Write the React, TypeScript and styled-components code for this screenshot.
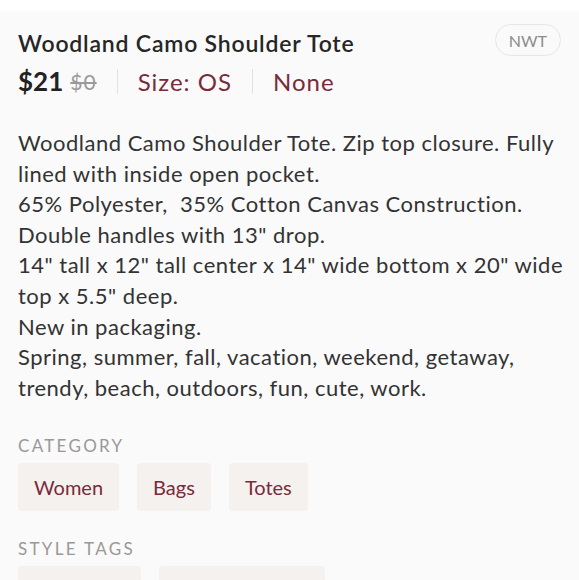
import React from "react";
import styled, { createGlobalStyle } from "styled-components";

const Global = createGlobalStyle`
  html, body { margin: 0; padding: 0; background: #ffffff; }
  body { font-family: Lato, "Open Sans", sans-serif; -webkit-font-smoothing: antialiased; }
`;

const Page = styled.div`
  margin-top: 11px;
  background: #fafafa;
  min-height: 569px;
  padding: 13px 12px 0 18px;
  box-sizing: border-box;
  color: #333333;
`;

const Header = styled.div`
  display: flex;
  justify-content: space-between;
  align-items: flex-start;
  padding-right: 6px;
`;

const Title = styled.h1`
  margin: 0;
  padding-top: 1px;
  font-size: 23px;
  font-weight: 600;
  letter-spacing: 0.8px;
  color: #262626;
  line-height: 36px;
`;

const Condition = styled.span`
  height: 32px;
  padding: 0 13px;
  box-sizing: border-box;
  display: inline-flex;
  align-items: center;
  border: 1px solid #e6e6e6;
  border-radius: 16px;
  font-size: 16px;
  color: #8c8c8c;
`;

const PriceRow = styled.div`
  display: flex;
  align-items: center;
  margin-top: 2px;
  height: 36px;
`;

const Price = styled.span`
  font-size: 26px;
  font-weight: 700;
  color: #222222;
`;

const OldPrice = styled.span`
  font-size: 21px;
  color: #9a9a9a;
  text-decoration: line-through;
  letter-spacing: 1px;
  margin-left: 7px;
`;

const Sep = styled.span`
  width: 1px;
  height: 25px;
  background: #e2e2e2;
  margin: 0 20px;
`;

const Meta = styled.span`
  font-size: 24px;
  letter-spacing: 1px;
  color: #7a2a3a;
`;

const Description = styled.p`
  margin: 29px 0 0 0;
  font-size: 22px;
  letter-spacing: 0.5px;
  line-height: 30.6px;
  color: #333333;
  white-space: pre-wrap;
`;

const Section = styled.div<{ $top: number }>`
  margin-top: ${(p) => p.$top}px;
`;

const Label = styled.div`
  font-size: 17px;
  letter-spacing: 2.3px;
  color: #9a9896;
  text-transform: uppercase;
  line-height: 20px;
`;

const Chips = styled.div`
  display: flex;
  gap: 18px;
  margin-top: 7px;
`;

const Chip = styled.span<{ $w?: number }>`
  height: 48px;
  box-sizing: border-box;
  padding: 0 16px;
  display: inline-flex;
  align-items: center;
  justify-content: center;
  background: #f4f1ee;
  border-radius: 4px;
  font-size: 20px;
  color: #7a2a3a;
  ${(p) => (p.$w ? `width: ${p.$w}px;` : "")}
`;

const description = `Woodland Camo Shoulder Tote. Zip top closure. Fully lined with inside open pocket.
65% Polyester,  35% Cotton Canvas Construction.
Double handles with 13" drop.
14" tall x 12" tall center x 14" wide bottom x 20" wide top x 5.5" deep.
New in packaging.
Spring, summer, fall, vacation, weekend, getaway, trendy, beach, outdoors, fun, cute, work.`;

export default function App() {
  return (
    <>
      <Global />
      <Page>
        <Header>
          <Title>Woodland Camo Shoulder Tote</Title>
          <Condition>NWT</Condition>
        </Header>
        <PriceRow>
          <Price>$21</Price>
          <OldPrice>$0</OldPrice>
          <Sep />
          <Meta>Size: OS</Meta>
          <Sep />
          <Meta>None</Meta>
        </PriceRow>
        <Description>{description}</Description>
        <Section $top={33}>
          <Label>Category</Label>
          <Chips>
            <Chip>Women</Chip>
            <Chip>Bags</Chip>
            <Chip>Totes</Chip>
          </Chips>
        </Section>
        <Section $top={28}>
          <Label>Style Tags</Label>
          <Chips>
            <Chip $w={123}>&nbsp;</Chip>
            <Chip $w={166}>&nbsp;</Chip>
          </Chips>
        </Section>
      </Page>
    </>
  );
}
